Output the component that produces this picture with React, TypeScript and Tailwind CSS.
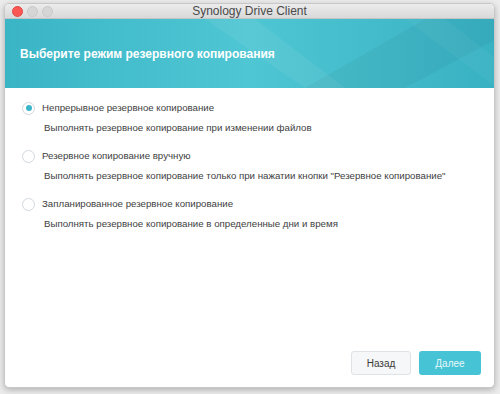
import React from "react";

const font = { fontFamily: '"Liberation Sans", Arial, sans-serif' };

function Radio({ checked }: { checked?: boolean }) {
  return (
    <span className="flex h-[13px] w-[13px] shrink-0 items-center justify-center rounded-full border border-[#d4d8dc] bg-white">
      {checked && <span className="h-[6px] w-[6px] rounded-full bg-[#3bb5c9]" />}
    </span>
  );
}

const options = [
  {
    title: "Непрерывное резервное копирование",
    desc: "Выполнять резервное копирование при изменении файлов",
    checked: true,
  },
  {
    title: "Резервное копирование вручную",
    desc: 'Выполнять резервное копирование только при нажатии кнопки "Резервное копирование"',
  },
  {
    title: "Запланированное резервное копирование",
    desc: "Выполнять резервное копирование в определенные дни и время",
  },
];

export default function App() {
  return (
    <div className="h-[394px] w-[500px] bg-[#ececec] pl-[4px] pr-[5px] pt-[3px]" style={font}>
      <div className="flex h-[385px] flex-col overflow-hidden rounded-[5px] border border-[#c8c8c8] bg-white shadow-[0_2px_6px_rgba(0,0,0,0.25)]">
        <div className="relative flex h-[15px] shrink-0 items-center border-b border-[#c4c4c4] bg-gradient-to-b from-[#ececec] to-[#d9d9d9]">
          <div className="flex gap-[4px] pl-[7px]">
            <span className="h-[11px] w-[11px] rounded-full bg-[#fc5753] border border-[#df4744]" />
            <span className="h-[11px] w-[11px] rounded-full bg-[#d6d6d6] border border-[#c8c8c8]" />
            <span className="h-[11px] w-[11px] rounded-full bg-[#d6d6d6] border border-[#c8c8c8]" />
          </div>
          <div className="absolute inset-0 flex items-center justify-center text-[12px] text-[#4a4a4a]">
            Synology Drive Client
          </div>
        </div>
        <div className="relative flex h-[69px] shrink-0 items-center overflow-hidden bg-gradient-to-r from-[#3ab5c6] via-[#4fc6d3] to-[#38b1c2] pl-[15px]">
          <svg className="absolute inset-0" width="492" height="69" viewBox="0 0 492 69" preserveAspectRatio="none">
            <polygon points="200,0 300,69 340,69 250,0" fill="#ffffff" opacity="0.06" />
            <polygon points="300,69 420,0 492,0 492,20 400,69" fill="#000000" opacity="0.035" />
            <polygon points="400,0 492,69 492,40 440,0" fill="#ffffff" opacity="0.04" />
          </svg>
          <span className="relative text-[12px] font-bold text-white">Выберите режим резервного копирования</span>
        </div>
        <div className="flex flex-1 flex-col pl-[17px] pt-[13px]">
          {options.map((o) => (
            <div key={o.title} className="mb-[14px] flex flex-col">
              <div className="flex h-[14px] items-center gap-[7px]">
                <Radio checked={o.checked} />
                <span className="text-[9.7px] text-[#3e3e3e]">{o.title}</span>
              </div>
              <div className="mt-[6px] flex h-[14px] items-center pl-[22px] text-[9.7px] text-[#3e3e3e]">{o.desc}</div>
            </div>
          ))}
        </div>
        <div className="flex justify-end gap-[8px] pb-[12px] pr-[13px]">
          <button className="h-[24px] w-[60px] rounded-[3px] border border-[#e0e3e6] bg-[#f6f7f8] text-[10px] text-[#3a3a3a]">
            Назад
          </button>
          <button className="h-[24px] w-[62px] rounded-[3px] bg-[#46c3d5] text-[10px] text-[#e6f8fb]">
            Далее
          </button>
        </div>
      </div>
    </div>
  );
}
